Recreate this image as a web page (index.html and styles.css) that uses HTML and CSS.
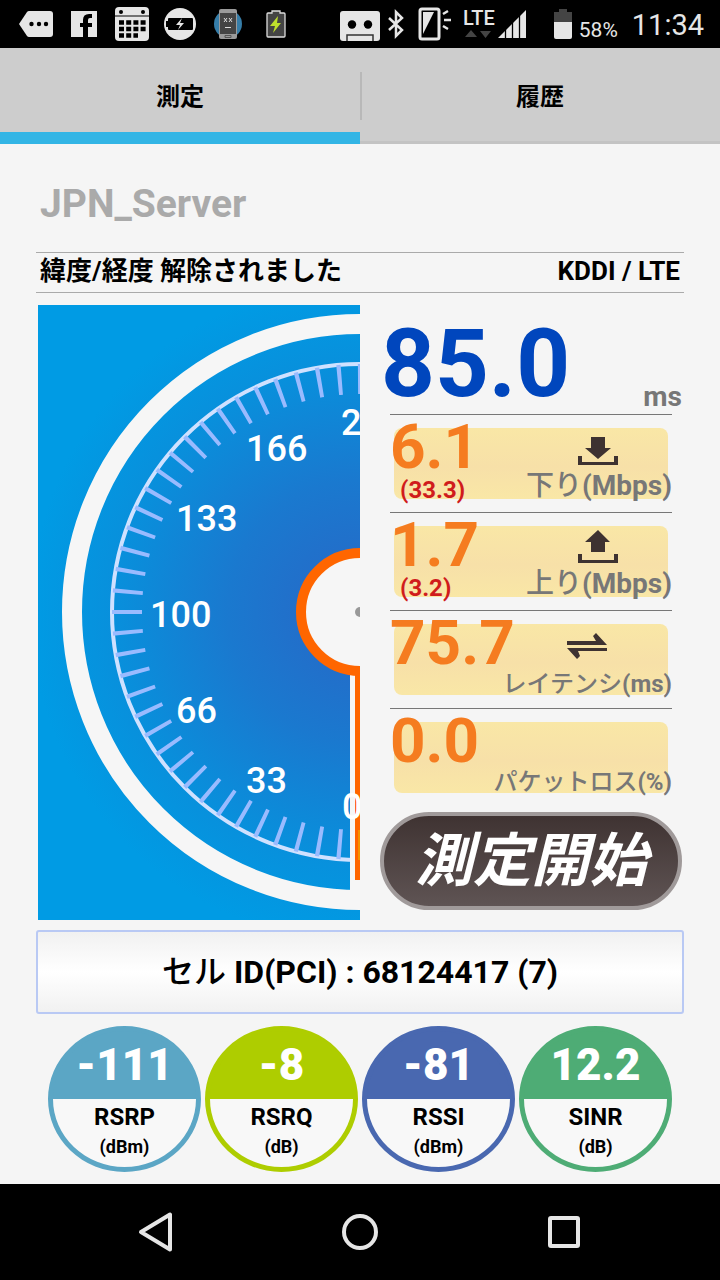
FILE: index.html
```html
<!DOCTYPE html>
<html lang="ja">
<head>
<meta charset="utf-8">
<meta name="viewport" content="width=device-width, initial-scale=1">
<title>測定</title>
<link rel="stylesheet" href="styles.css">
</head>
<body>
<div class="screen">
  <header class="status">
    <div class="notices">
      <svg class="notice" viewBox="12 0 48 48"><path fill="#e6e6e6" d="M29 11H50a3 3 0 0 1 3 3V34a3 3 0 0 1-3 3H29a3 3 0 0 1-2-1L19 24l8-12a3 3 0 0 1 2-1z"/><g fill="#000"><circle cx="31.500" cy="24" r="2.200"/><circle cx="39" cy="24" r="2.200"/><circle cx="46" cy="24" r="2.200"/></g></svg>
      <svg class="notice" viewBox="60 0 48 48"><path fill="#e6e6e6" d="M71 11h26v26H71z"/><path fill="#000" d="M83 37V27h-3v-4h3v-3q0-6 6-6h3v4h-2q-2 0-2 2v3h4v4h-4v10z"/></svg>
      <svg class="notice" viewBox="108 0 48 48"><rect x="115" y="7" width="34" height="34" rx="4" fill="#e6e6e6"/><path stroke="#000" d="M115 16h34"/><g fill="#000"><circle cx="121" cy="12" r="2"/><circle cx="143" cy="12" r="2"/></g><g stroke="#000" stroke-width="4.600" stroke-dasharray="5 2.200"><path d="M119 22.500h27M119 29h27M119 35.500h19"/></g></svg>
      <svg class="notice" viewBox="156 0 48 48"><circle cx="180" cy="24" r="16" fill="#e6e6e6"/><rect x="168" y="18" width="25" height="12" rx="1" fill="#000"/><path fill="#000" d="M166 21h3v6h-3z"/><path fill="#e6e6e6" d="M182 18l-6 7h4l-2 5 6-7h-4z"/></svg>
      <svg class="notice" viewBox="204 0 48 48"><circle cx="228" cy="24" r="14" fill="#367da8"/><rect x="219" y="9" width="18" height="30" rx="2" fill="#9a9a9a"/><path fill="#444" d="M220 13h16v21h-16z"/><path fill="none" stroke="#ddd" d="M224 18l3 4m0-4l-3 4M229 18l3 4m0-4l-3 4M225 27.500h6"/><path fill="none" stroke="#555" d="M225 35.500h6v2h-6z"/></svg>
      <svg class="notice" viewBox="252 0 48 48"><path fill="#444" stroke="#ddd" stroke-width="1.300" d="M268 13h4v-2h8v2h4q1 0 1 1v22q0 1-1 1h-16q-1 0-1-1V14q0-1 1-1z"/><path fill="#bfe02c" d="M278 16l-8 10h5l-2 7 8-10h-4z"/></svg>
    </div>
    <div class="system">
      <svg width="42" height="48" viewBox="339 0 42 48"><rect x="340" y="11" width="40" height="30" rx="3" fill="#e6e6e6"/><circle cx="352" cy="24.500" r="4.200"/><circle cx="368" cy="24.500" r="4.200"/><path fill="none" stroke="#333" stroke-width="1.500" d="M347 41v-6h26v6"/></svg>
      <svg width="18" height="48" viewBox="387 0 18 48"><path fill="none" stroke="#e6e6e6" stroke-width="2.500" d="M389 18l13 12-6 6V12l6 6-13 12"/></svg>
      <svg width="42" height="48" viewBox="411 0 42 48"><rect x="420" y="9" width="19" height="30" rx="2" fill="none" stroke="#e6e6e6" stroke-width="3"/><path fill="#e6e6e6" d="M423 12h11l-11 22z"/><path stroke="#e6e6e6" stroke-width="2.500" d="M443 14l5-3M444 20h7M443 26l5 3"/></svg>
      <svg width="68" height="48" viewBox="459 0 68 48"><text class="lte" x="463" y="25">LTE</text><path fill="#444" d="M465 37l6-7 6 7zM480 31h11l-5.500 7z"/><path fill="#e6e6e6" d="M498 38l28-28v28z"/><path stroke="#000" stroke-width="1.300" d="M505.500 20v18M512.500 14v24M519.500 9v29"/></svg>
      <svg width="40" height="48" viewBox="533 0 40 48"><path fill="#444" d="M559 9h8v3h5v10h-18V12h5z"/><path fill="#e6e6e6" d="M554 22h18v15q0 2-2 2h-14q-2 0-2-2z"/></svg>
      <span class="percent">58%</span>
      <span class="clock">11:34</span>
    </div>
  </header>

  <nav class="tabs">
    <button class="tab tab-on" type="button">測定</button>
    <button class="tab" type="button">履歴</button>
  </nav>

  <main class="content">
    <h1 class="server">JPN_Server</h1>
    <div class="info"><span>緯度/経度 解除されました</span><span>KDDI / LTE</span></div>

    <div class="results">
      <svg class="gauge" viewBox="38 305 322 615">
        <defs>
          <radialGradient id="dial" gradientUnits="userSpaceOnUse" cx="360" cy="612" r="330">
            <stop offset="0.100" stop-color="#256bc8"/><stop offset="0.400" stop-color="#1a79cf"/><stop offset="0.750" stop-color="#0890dc"/><stop offset="1" stop-color="#009be4"/>
          </radialGradient>
        </defs>
        <path fill="url(#dial)" d="M38 305h322v615H38z"/>
        <circle cx="360" cy="612" r="288" fill="none" stroke="#f6f6f6" stroke-width="20"/>
        <circle cx="360" cy="612" r="248" fill="none" stroke="#cfe1ff" stroke-width="4"/>
        <circle class="ticks" cx="360" cy="612" r="233" pathLength="720"/>
        <path fill="#f6f6f6" d="M350 670h10v230h-10z"/>
        <path fill="#ff6600" d="M355 670h5v210h-5z"/>
        <path fill="#f59300" d="M358 830h2v30h-2z"/>
        <circle cx="360" cy="612" r="59" fill="#f6f6f6" stroke="#ff6600" stroke-width="10"/>
        <circle cx="360" cy="612" r="5" fill="#999"/>
        <g class="dial-text">
          <text x="341" y="435">200</text><text x="246" y="461">166</text><text x="176" y="531">133</text><text x="150" y="627">100</text><text x="176" y="723">66</text><text x="246" y="793">33</text><text x="342" y="819">0</text>
        </g>
      </svg>

      <div class="readings">
        <div class="ping"><strong class="ping-value">85.0</strong><span class="ping-unit">ms</span></div>

        <div class="metric">
          <div class="figures"><strong class="value">6.1</strong><span class="previous">(33.3)</span></div>
          <div class="caption">
            <svg class="arrow" viewBox="577 436 42 30"><path fill="#3e3231" d="M591 437h14v11h6l-13 11-13-11h6zM578 456h4v6h32v-6h4v9h-40z"/></svg>
            <span class="label label-large">下り<b>(Mbps)</b></span>
          </div>
        </div>
        <div class="metric">
          <div class="figures"><strong class="value">1.7</strong><span class="previous">(3.2)</span></div>
          <div class="caption">
            <svg class="arrow" viewBox="577 534 42 30"><path fill="#3e3231" d="M598 530l12 12h-5v10h-14v-10h-6zM578 554h4v6h32v-6h4v9h-40z"/></svg>
            <span class="label label-large">上り<b>(Mbps)</b></span>
          </div>
        </div>
        <div class="metric">
          <div class="figures"><strong class="value">75.7</strong></div>
          <div class="caption">
            <svg class="arrow arrow-swap" viewBox="566 632 42 30"><path fill="#3e3231" d="M567 641h29l-3-5 3-3 11 12h-40zM567 648h40v3h-29l2 5-3 3z"/></svg>
            <span class="label">レイテンシ<b>(ms)</b></span>
          </div>
        </div>
        <div class="metric">
          <div class="figures"><strong class="value">0.0</strong></div>
          <div class="caption"><span class="label">パケットロス<b>(%)</b></span></div>
        </div>
        <button class="start" type="button">測定開始</button>
      </div>
    </div>

    <div class="cell">セル <b>ID(PCI) : 68124417 (7)</b></div>

    <div class="signals">
      <div class="signal rsrp"><strong class="signal-value">-111</strong><span class="signal-name">RSRP</span><span class="signal-unit">(dBm)</span></div>
      <div class="signal rsrq"><strong class="signal-value">-8</strong><span class="signal-name">RSRQ</span><span class="signal-unit">(dB)</span></div>
      <div class="signal rssi"><strong class="signal-value">-81</strong><span class="signal-name">RSSI</span><span class="signal-unit">(dBm)</span></div>
      <div class="signal sinr"><strong class="signal-value">12.2</strong><span class="signal-name">SINR</span><span class="signal-unit">(dB)</span></div>
    </div>
  </main>

  <footer class="softkeys">
    <button class="key" type="button" aria-label="戻る"><svg width="48" height="48" viewBox="0 0 48 48"><path d="M38 6.500v35L9 24z"/></svg></button>
    <button class="key" type="button" aria-label="ホーム"><svg width="48" height="48" viewBox="0 0 48 48"><circle cx="24" cy="24" r="16"/></svg></button>
    <button class="key" type="button" aria-label="履歴一覧"><svg width="48" height="48" viewBox="0 0 48 48"><rect x="10" y="10" width="28" height="28" rx="1"/></svg></button>
  </footer>
</div>
</body>
</html>
```
FILE: styles.css
```css
* { box-sizing: border-box; }
body {
  margin: 0;
  background: #f5f5f5;
  color: #000;
  font-family: Roboto, "Noto Sans CJK JP", sans-serif;
}
button { font: inherit; color: inherit; border: 0; padding: 0; background: none; }
svg { display: block; }
.screen { display: flex; flex-direction: column; min-height: 100vh; }

.status {
  display: flex;
  justify-content: space-between;
  height: 48px;
  padding: 0 16px 0 12px;
  background: #000;
  color: #e6e6e6;
}
.notices { display: flex; }
.notice { width: 48px; height: 48px; }
.system { display: flex; align-items: center; gap: 6px; }
.lte { font-size: 20px; font-weight: 500; fill: #e6e6e6; }
.percent { font-size: 21px; line-height: 24px; padding-top: 12px; }
.clock { font-size: 29px; line-height: 32px; padding: 2px 0 0 8px; }

.tabs { display: flex; height: 96px; background: #cdcdcd; }
.tab {
  position: relative;
  flex: 1;
  font-size: 24px;
  font-weight: 700;
  border-bottom: 3px solid #c3c3c3;
}
.tab-on { border-bottom: 12px solid #33b5e5; padding-top: 9px; }
.tab + .tab::before {
  content: "";
  position: absolute;
  left: 0;
  top: 24px;
  width: 2px;
  height: 48px;
  background: #b8b8b8;
}

.content { flex: 1; padding: 36px 36px 12px; }
.server {
  margin: 0 4px 24px;
  font-size: 39px;
  line-height: 48px;
  font-weight: 700;
  color: #aaa;
}
.info {
  display: flex;
  justify-content: space-between;
  align-items: center;
  height: 41px;
  padding: 0 4px 4px;
  border: solid #aaa;
  border-width: 1px 0;
  font-size: 26px;
  line-height: 34px;
  font-weight: 700;
}

.results {
  display: grid;
  grid-template-columns: minmax(0, 322fr) minmax(0, 302fr);
  gap: 20px;
  padding: 12px 2px 0;
}
.gauge { width: 100%; }
.ticks {
  fill: none;
  stroke: #99bbff;
  stroke-width: 30;
  stroke-dasharray: 2 8;
  stroke-dashoffset: 1;
}
.dial-text { font-size: 36px; font-weight: 500; fill: #fff; }

.ping {
  display: flex;
  justify-content: space-between;
  align-items: flex-end;
  height: 109px;
}
.ping-value { margin-left: 1px; font-size: 94px; line-height: 100px; color: #0046bd; }
.ping-unit { font-size: 28px; line-height: 34px; font-weight: 700; color: #777; }

.metric {
  position: relative;
  display: grid;
  height: 98px;
  margin: 0 10px;
  border-top: 1px solid #777;
}
.metric::before {
  content: "";
  position: absolute;
  inset: 13px 4px;
  border-radius: 8px;
  background: linear-gradient(#f9e7a6, #f7e0a8 55%, #f9e7a6);
}
.figures, .caption { grid-area: 1 / 1; position: relative; display: flex; flex-direction: column; }
.value { font-size: 62px; line-height: 64px; color: #f57c20; }
.previous { margin-left: 10px; font-size: 24px; line-height: 22px; font-weight: 700; color: #d01c1c; }
.caption { justify-content: flex-end; align-items: flex-end; padding-bottom: 8px; }
.arrow { width: 42px; height: 30px; margin: 0 53px 2px 0; overflow: visible; }
.arrow-swap { margin: 0 64px 6px 0; }
.label { font-size: 24px; line-height: 32px; font-weight: 500; color: #777; white-space: nowrap; }
.label-large { font-size: 28px; line-height: 36px; }

.start {
  width: 100%;
  height: 98px;
  margin-top: 6px;
  border: 4px solid #a09a9a;
  border-radius: 49px;
  background: linear-gradient(#3f3332, #5f5454);
  color: #fff;
  font-size: 58px;
  line-height: 64px;
  font-weight: 700;
  font-style: italic;
}

.cell {
  margin-top: 10px;
  padding: 16px;
  border: 2px solid #b9c9f4;
  border-radius: 3px;
  background: linear-gradient(#f1f1f1, #fff 50%, #f1f1f1);
  font-size: 32px;
  line-height: 48px;
  font-weight: 500;
  text-align: center;
}

.signals {
  display: grid;
  grid-template-columns: repeat(4, 1fr);
  gap: 4px;
  padding: 12px 12px 0;
}
.signal {
  display: flex;
  flex-direction: column;
  align-items: center;
  height: 146px;
  border: 5px solid;
  border-radius: 50%;
  background: linear-gradient(currentColor 73px, #f8f8f8 73px) border-box;
  font-weight: 700;
}
.signal-value {
  height: 68px;
  padding-top: 8px;
  color: #fff;
  font-size: 44px;
  line-height: 52px;
}
.signal-name, .signal-unit { margin-top: 4px; color: #000; }
.signal-name { font-size: 24px; line-height: 28px; }
.signal-unit { font-size: 18px; line-height: 24px; }
.rsrp { color: #5ba6c5; }
.rsrq { color: #aecd00; }
.rssi { color: #4968b0; }
.sinr { color: #4eac75; }

.softkeys { display: flex; height: 96px; padding: 0 7.5%; background: #000; }
.key { flex: 1; display: flex; align-items: center; justify-content: center; }
.key svg { fill: none; stroke: #e6e6e6; stroke-width: 4; stroke-linejoin: round; }
```
